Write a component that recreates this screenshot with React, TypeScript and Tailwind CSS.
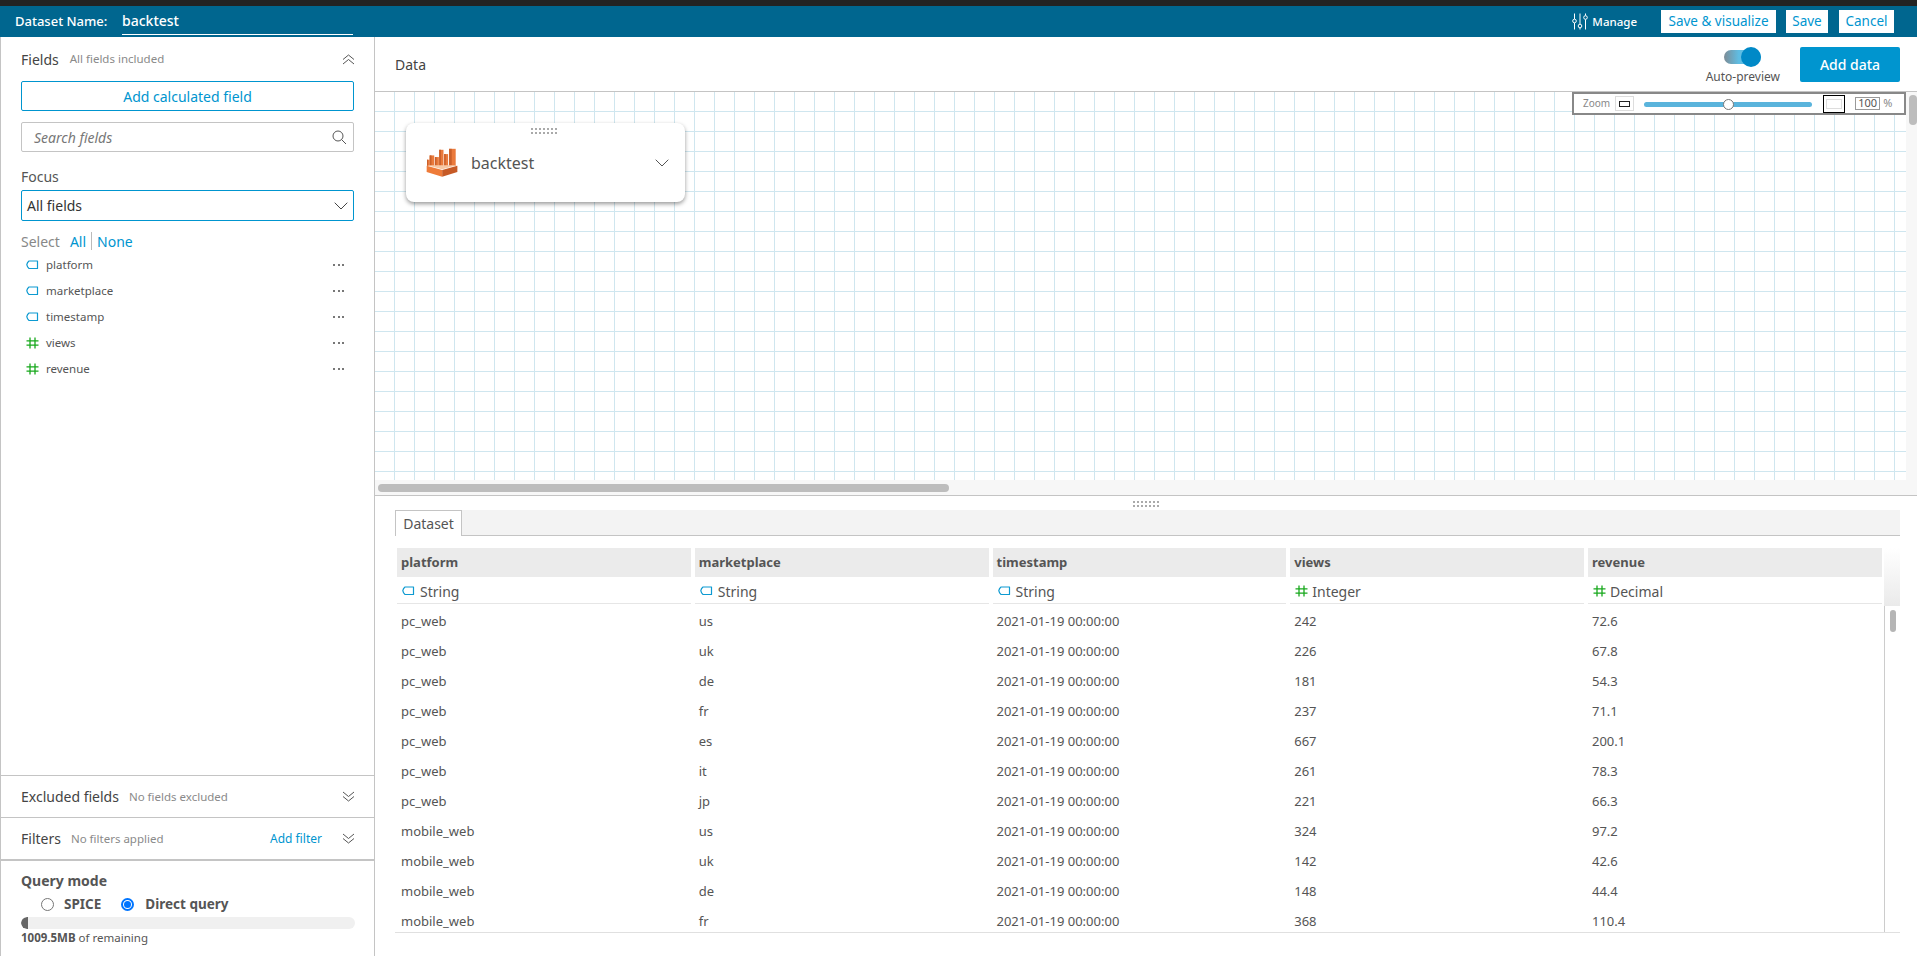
import React from "react";

const font = "font-['Noto_Sans','Open_Sans',sans-serif]";

function StringIcon() {
  return (
    <svg width="13" height="10" viewBox="0 0 13 10" fill="none" className="shrink-0">
      <path d="M3 1H11.5V8.5H3Q1.2 7 0.8 4.7Q1.2 2.4 3 1Z" stroke="#0d9ad1" strokeWidth="1.2" strokeLinejoin="round" />
    </svg>
  );
}

function HashIcon() {
  return (
    <svg width="13" height="12" viewBox="0 0 13 12" fill="none" className="shrink-0">
      <path d="M4 0.5V11.5M9 0.5V11.5M0.5 3.8H12.5M0.5 8.2H12.5" stroke="#17a81c" strokeWidth="1.3" />
    </svg>
  );
}

function Chevrons({ up }: { up?: boolean }) {
  return (
    <svg width="13" height="11" viewBox="0 0 13 11" fill="none" className={up ? "" : "rotate-180"}>
      <path d="M1 5.5L6.5 1L12 5.5" stroke="#555" strokeWidth="1" />
      <path d="M1 10L6.5 5.5L12 10" stroke="#555" strokeWidth="1" />
    </svg>
  );
}

function Dots() {
  return (
    <span className="flex gap-[2.5px]">
      <span className="h-[2px] w-[2px] bg-[#777]" />
      <span className="h-[2px] w-[2px] bg-[#777]" />
      <span className="h-[2px] w-[2px] bg-[#777]" />
    </span>
  );
}

function Grip() {
  return (
    <div className="grid grid-cols-[repeat(7,2px)] gap-x-[2px] gap-y-[2px]">
      {Array.from({ length: 14 }).map((_, i) => (
        <span key={i} className="h-[2px] w-[2px] bg-[#aaa]" />
      ))}
    </div>
  );
}

function Logo() {
  const bars: [number, number, number][] = [
    [18, 26, 55],
    [26, 40, 42],
    [42, 54, 47],
    [55, 68, 25],
    [70, 82, 38],
    [85, 105, 22],
  ];
  return (
    <svg width="33" height="30" viewBox="15 20 100 90" fill="none">
      {bars.map(([a, b, t]) => (
        <g key={a}>
          <path d={`M${a} ${t}H${b}V74H${a}Z`} fill="#ea7a3c" />
          <path d={`M${a} ${t}H${a + (b - a) * 0.4}V74H${a}Z`} fill="#c9602b" />
        </g>
      ))}
      <path d="M17 72H110L64 84Z" fill="#f7c7a3" />
      <path d="M17 73L64 86V107L17 92Z" fill="#ee7b39" />
      <path d="M110 73L64 86V107L110 92Z" fill="#c65a26" />
    </svg>
  );
}

function FieldRow({ name, num }: { name: string; num?: boolean }) {
  return (
    <div className="flex h-[26px] items-center pl-[25px] pr-[30px]">
      <span className="flex w-[20px]">{num ? <HashIcon /> : <StringIcon />}</span>
      <span className="flex-1 text-[11.5px] text-[#555]">{name}</span>
      <Dots />
    </div>
  );
}

const rows: [string, string, string, string][] = [
  ["pc_web", "us", "242", "72.6"],
  ["pc_web", "uk", "226", "67.8"],
  ["pc_web", "de", "181", "54.3"],
  ["pc_web", "fr", "237", "71.1"],
  ["pc_web", "es", "667", "200.1"],
  ["pc_web", "it", "261", "78.3"],
  ["pc_web", "jp", "221", "66.3"],
  ["mobile_web", "us", "324", "97.2"],
  ["mobile_web", "uk", "142", "42.6"],
  ["mobile_web", "de", "148", "44.4"],
  ["mobile_web", "fr", "368", "110.4"],
];

const columns = [
  { name: "platform", type: "String", num: false },
  { name: "marketplace", type: "String", num: false },
  { name: "timestamp", type: "String", num: false },
  { name: "views", type: "Integer", num: true },
  { name: "revenue", type: "Decimal", num: true },
];

function Sidebar() {
  return (
    <aside className="flex w-[375px] shrink-0 flex-col border-x border-[#c4c4c4] bg-white">
      <div className="flex-1">
        <div className="flex h-[44px] items-center pl-[20px] pr-[19px]">
          <span className="text-[14px] text-[#444]">Fields</span>
          <span className="ml-[11px] flex-1 text-[11.5px] text-[#8a8a8a]">All fields included</span>
          <Chevrons up />
        </div>
        <div className="mx-[20px] flex h-[30px] items-center justify-center rounded-[2px] border border-[#0095cf] text-[14px] text-[#0095cf]">
          Add calculated field
        </div>
        <div className="mx-[20px] mt-[11px] flex h-[30px] items-center rounded-[2px] border border-[#c4c4c4] pl-[12px] pr-[6px]">
          <span className="flex-1 text-[14px] italic text-[#777]">Search fields</span>
          <svg width="15" height="15" viewBox="0 0 15 15" fill="none">
            <circle cx="6" cy="6" r="5" stroke="#555" strokeWidth="1" />
            <path d="M9.6 9.6L14 14" stroke="#555" strokeWidth="1" />
          </svg>
        </div>
        <div className="mx-[20px] mt-[15px] text-[14px] leading-[20px] text-[#555]">Focus</div>
        <div className="mx-[20px] mt-[3px] flex h-[31px] items-center rounded-[2px] border border-[#0095cf] pl-[5px] pr-[5px]">
          <span className="flex-1 text-[14px] text-[#333]">All fields</span>
          <svg width="14" height="8" viewBox="0 0 14 8" fill="none">
            <path d="M0.7 0.7L7 7L13.3 0.7" stroke="#444" strokeWidth="1" />
          </svg>
        </div>
        <div className="mt-[10px] flex h-[20px] items-center pl-[20px] text-[14px]">
          <span className="text-[#888]">Select</span>
          <span className="ml-[10px] text-[#0095cf]">All</span>
          <span className="mx-[5px] h-[18px] w-px bg-[#bbb]" />
          <span className="text-[#0095cf]">None</span>
        </div>
        <div className="mt-[1px]">
          <FieldRow name="platform" />
          <FieldRow name="marketplace" />
          <FieldRow name="timestamp" />
          <FieldRow name="views" num />
          <FieldRow name="revenue" num />
        </div>
      </div>
      <div className="flex h-[42px] items-center border-t border-[#c4c4c4] pl-[20px] pr-[19px]">
        <span className="text-[14px] text-[#444]">Excluded fields</span>
        <span className="ml-[10px] flex-1 text-[11.5px] text-[#8a8a8a]">No fields excluded</span>
        <Chevrons />
      </div>
      <div className="flex h-[42px] items-center border-t border-[#c4c4c4] pl-[20px] pr-[19px]">
        <span className="text-[14px] text-[#444]">Filters</span>
        <span className="ml-[10px] flex-1 text-[11.5px] text-[#8a8a8a]">No filters applied</span>
        <span className="mr-[20px] text-[12px] text-[#0095cf]">Add filter</span>
        <Chevrons />
      </div>
      <div className="h-[97px] border-t-2 border-[#c4c4c4] pl-[20px] pr-[19px] pt-[10px]">
        <div className="text-[14px] font-bold leading-[20px] text-[#555]">Query mode</div>
        <div className="mt-[3px] flex h-[20px] items-center pl-[20px] text-[13.5px] font-bold text-[#555]">
          <span className="h-[13px] w-[13px] rounded-full border border-[#767676] bg-white" />
          <span className="ml-[10px]">SPICE</span>
          <span className="ml-[20px] flex h-[13px] w-[13px] items-center justify-center rounded-full border-2 border-[#0075ff] bg-white">
            <span className="h-[7px] w-[7px] rounded-full bg-[#0075ff]" />
          </span>
          <span className="ml-[11px]">Direct query</span>
        </div>
        <div className="mt-[3px] h-[12px] overflow-hidden rounded-full bg-[#f0f0f0]">
          <div className="h-full w-[7px] rounded-l-full bg-[#666]" />
        </div>
        <div className="mt-[1px] text-[11.5px] leading-[16px] text-[#555]">
          <span className="font-bold">1009.5MB</span> of remaining
        </div>
      </div>
    </aside>
  );
}

function ZoomBar() {
  return (
    <div className="absolute right-[11px] top-0 flex h-[23px] w-[334px] items-center border-2 border-[#888] bg-white pl-[9px] text-[10px] text-[#888]">
      <span>Zoom</span>
      <span className="ml-[5px] flex h-[15px] w-[19px] items-center justify-center border border-[#ddd]">
        <span className="h-[6px] w-[11px] border border-[#222]" />
      </span>
      <div className="relative ml-[10px] mt-[1px] h-[5px] w-[168px] rounded-full bg-[#5ab4dc]">
        <span className="absolute left-[79px] top-[-3px] h-[11px] w-[11px] rounded-full border border-[#777] bg-white" />
      </div>
      <span className="ml-[11px] flex h-[18px] w-[22px] items-center justify-center border border-black">
        <span className="h-[10px] w-[16px] border border-[#ddd]" />
      </span>
      <span className="ml-[10px] flex h-[13px] w-[25px] items-center justify-center border border-[#999] text-[11px] text-[#555]">100</span>
      <span className="ml-[3px] text-[11px]">%</span>
    </div>
  );
}

function Canvas() {
  return (
    <div className="relative h-[403px] shrink-0 overflow-hidden bg-white">
      <div className="h-[403px] bg-[linear-gradient(to_right,#cfe6ef_1px,transparent_1px),linear-gradient(to_bottom,#cfe6ef_1px,transparent_1px)] bg-[length:20px_20px] bg-[position:19px_19px] pl-[31px] pt-[31px]">
        <div className="relative flex h-[79px] w-[279px] items-center rounded-[8px] bg-white pl-[20px] pr-[16px] shadow-[0_2px_4px_rgba(0,0,0,0.4)]">
          <div className="absolute left-[125px] top-[5px]">
            <Grip />
          </div>
          <Logo />
          <span className="ml-[12px] flex-1 text-[16px] text-[#555]">backtest</span>
          <svg width="14" height="8" viewBox="0 0 14 8" fill="none">
            <path d="M0.7 0.7L7 7L13.3 0.7" stroke="#555" strokeWidth="1" />
          </svg>
        </div>
      </div>
      <ZoomBar />
      <div className="absolute right-0 top-0 h-full w-[11px] bg-[#f7f7f7]">
        <div className="ml-[3px] mt-[3px] h-[30px] w-[8px] rounded-full bg-[#bdbdbd]" />
      </div>
      <div className="absolute bottom-0 left-0 right-0 h-[15px] bg-[#f7f7f7]">
        <div className="ml-[3px] mt-[4px] h-[8px] w-[571px] rounded-full bg-[#bdbdbd]" />
      </div>
    </div>
  );
}

function DataGrid() {
  return (
    <div className="flex-1 bg-white pl-[20px] pr-[17px]">
      <div className="mt-[1px] flex h-[26px] border-b border-[#c4c4c4] bg-[#f3f3f3]">
        <div className="-mb-px flex w-[67px] items-center justify-center border-x border-t border-[#c4c4c4] bg-white text-[14px] text-[#555]">
          Dataset
        </div>
      </div>
      <div className="relative mt-[12px] h-[385px] overflow-hidden border-b border-[#e0e0e0] pl-[2px]">
        <div className="mb-[3px] flex gap-[4px]">
          {columns.map((c) => (
            <div key={c.name} className="w-[293.75px]">
              <div className="flex h-[29px] items-center bg-[#ebebeb] pl-[4px] text-[13px] font-bold text-[#555]">
                {c.name}
              </div>
              <div className={`flex h-[27px] items-center border-b border-[#e6e6e6] pl-[5px] pt-[2px] text-[14px] text-[#555] ${c.num ? "gap-[4px]" : "gap-[5px]"}`}>
                {c.num ? <HashIcon /> : <StringIcon />}
                <span>{c.type}</span>
              </div>
            </div>
          ))}
        </div>
        {rows.map((r, i) => (
          <div key={i} className="flex h-[30px] items-center gap-[4px] text-[13px] text-[#555]">
            <div className="w-[293.75px] pl-[4px]">{r[0]}</div>
            <div className="w-[293.75px] pl-[4px]">{r[1]}</div>
            <div className="w-[293.75px] pl-[4px]">2021-01-19 00:00:00</div>
            <div className="w-[293.75px] pl-[4px]">{r[2]}</div>
            <div className="w-[293.75px] pl-[4px]">{r[3]}</div>
          </div>
        ))}
        <div className="absolute right-0 top-0 h-[58px] w-[16px] bg-[linear-gradient(to_bottom,#ffffff,#eaeaea)]" />
        <div className="absolute bottom-0 right-[15px] top-[58px] w-px bg-[#ccc]" />
        <div className="absolute right-[4px] top-[62px] h-[22px] w-[6px] rounded-full bg-[#b5b5b5]" />
      </div>
    </div>
  );
}

export default function App() {
  return (
    <div className={`flex h-screen w-full flex-col overflow-hidden bg-white ${font}`}>
      <div className="h-[6px] shrink-0 bg-[#232323]" />
      <header className="flex h-[31px] shrink-0 items-center bg-[#00668f] pl-[15px] pr-[23px] text-white">
        <span className="w-[107px] text-[13px] font-medium">Dataset Name:</span>
        <span className="h-[26px] w-[231px] border-b border-white pt-[2px] text-[14px] font-medium leading-[20px]">backtest</span>
        <div className="flex-1" />
        <svg width="16" height="17" viewBox="0 0 16 17" fill="none" stroke="white" strokeWidth="1">
          <path d="M2.5 0.5V6M2.5 10V16.5M8 0.5V11M8 15V16.5M13.5 0.5V2.5M13.5 6.5V16.5" />
          <circle cx="2.5" cy="8" r="1.8" />
          <circle cx="8" cy="13" r="1.8" />
          <circle cx="13.5" cy="4.5" r="1.8" />
        </svg>
        <span className="ml-[4px] text-[11.5px] font-medium">Manage</span>
        <span className="ml-[24px] flex h-[23px] w-[115px] items-center justify-center bg-white text-[13.5px] text-[#0095cf]">
          Save &amp; visualize
        </span>
        <span className="ml-[10px] flex h-[23px] w-[42px] items-center justify-center bg-white text-[13.5px] text-[#0095cf]">
          Save
        </span>
        <span className="ml-[11px] flex h-[23px] w-[55px] items-center justify-center bg-white text-[13.5px] text-[#0095cf]">
          Cancel
        </span>
      </header>
      <div className="flex min-h-0 flex-1">
        <Sidebar />
        <main className="flex min-w-0 flex-1 flex-col">
          <div className="flex h-[55px] shrink-0 items-center border-b border-[#c4c4c4] pl-[20px] pr-[17px]">
            <span className="flex-1 text-[14px] text-[#444]">Data</span>
            <div className="mr-[20px] flex flex-col items-center">
              <div className="relative mt-[7px] h-[14px] w-[37px] rounded-full bg-[linear-gradient(to_right,#7d8c96,#5fbde3_40%)]">
                <span className="absolute right-0 top-[-3px] h-[20px] w-[20px] rounded-full bg-[#0089c7]" />
              </div>
              <span className="mt-[5px] text-[12px] leading-[16px] text-[#555]">Auto-preview</span>
            </div>
            <div className="flex h-[35px] w-[100px] items-center justify-center rounded-[2px] bg-[#0095cf] text-[14px] font-medium text-white">
              Add data
            </div>
          </div>
          <Canvas />
          <div className="flex h-[14px] shrink-0 items-center justify-center border-t border-[#c4c4c4] pt-[2px]">
            <Grip />
          </div>
          <DataGrid />
        </main>
      </div>
    </div>
  );
}
